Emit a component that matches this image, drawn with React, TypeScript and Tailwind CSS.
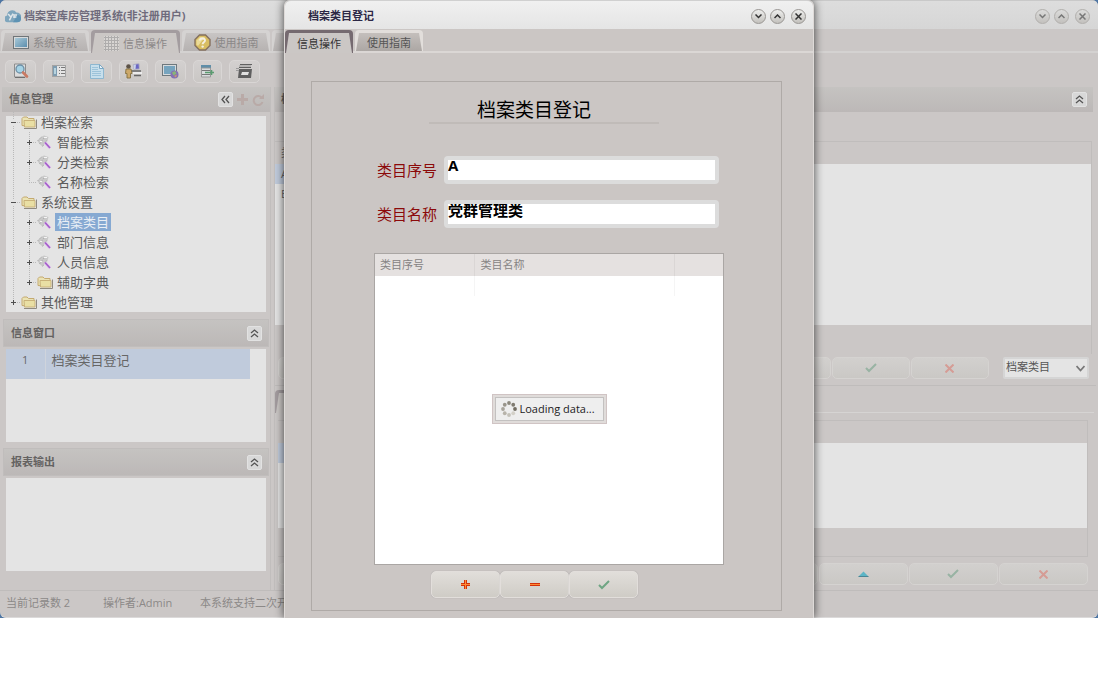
import { useState } from "react";
import type { ReactNode } from "react";

interface TreeItem {
  label: string;
  level: 1 | 2;
  sign: "plus" | "minus" | "none";
  folder: boolean;
  last?: boolean;
}

const TREE: TreeItem[] = [
  { label: "档案检索", level: 1, sign: "minus", folder: true },
  { label: "智能检索", level: 2, sign: "plus", folder: false },
  { label: "分类检索", level: 2, sign: "plus", folder: false },
  { label: "名称检索", level: 2, sign: "none", folder: false, last: true },
  { label: "系统设置", level: 1, sign: "minus", folder: true },
  { label: "档案类目", level: 2, sign: "plus", folder: false },
  { label: "部门信息", level: 2, sign: "plus", folder: false },
  { label: "人员信息", level: 2, sign: "plus", folder: false },
  { label: "辅助字典", level: 2, sign: "plus", folder: true, last: true },
  { label: "其他管理", level: 1, sign: "plus", folder: true, last: true },
];

/* ---------- icons ---------- */

const Logo = () => (
  <svg width="16" height="14" viewBox="0 0 16 14">
    <path d="M3.5 13.2A3.4 3.4 0 0 1 2.2 6.4 5 5 0 0 1 11.4 3.6 4.6 4.6 0 0 1 12 13.2z" fill="#7fa6bd" />
    <path d="M8 13.2 12.5 6A3.6 3.6 0 0 1 12.3 13.2z" fill="#5e93b4" />
    <path d="M3.2 5 6 8.2 8 4.6M6 8.2 4.4 11.4M9 9V6h3M9 8h2.4" fill="none" stroke="#dfe6ea" strokeWidth="1.5" />
  </svg>
);

const ScreenIcon = () => (
  <svg width="16" height="13" viewBox="0 0 16 13">
    <defs>
      <linearGradient id="screen" x1="0" y1="0" x2="1" y2="1">
        <stop offset="0" stopColor="#a9c9d8" />
        <stop offset="1" stopColor="#5d8fae" />
      </linearGradient>
    </defs>
    <rect x="0.5" y="0.5" width="15" height="12" fill="#d8dadb" stroke="#6f7578" />
    <rect x="2" y="2" width="12" height="9" fill="url(#screen)" />
  </svg>
);

const GridIcon = () => (
  <svg width="15" height="15" viewBox="0 0 15 15" stroke="#aeacac" fill="none">
    <path d="M0 0h15v15H0z" fill="#ffffff" fillOpacity="0.25" stroke="none" />
    <path d="M1.500 0v15M4.500 0v15M7.500 0v15M10.500 0v15M13.500 0v15M0 1.500h15M0 4.500h15M0 7.500h15M0 10.500h15M0 13.500h15" shapeRendering="crispEdges" />
  </svg>
);

const HelpIcon = () => (
  <svg width="17" height="17" viewBox="0 0 17 17">
    <path d="M5.500 1h6L16 5.500v6L11.500 16h-6L1 11.500v-6z" fill="#d8bd62" stroke="#84705f" strokeWidth="1.400" />
    <path d="M6 3h5l-7 9-1.500-1.500V6.500z" fill="#f0e2a6" opacity="0.8" />
    <path d="M6 6.500C6 3.800 11 3.800 11 6.500 11 8.300 8.600 8.300 8.600 10.300" fill="none" stroke="#f4efe0" strokeWidth="1.900" />
    <circle cx="8.600" cy="12.600" r="1.200" fill="#f4efe0" />
  </svg>
);

const FolderIcon = () => (
  <svg width="16" height="13" viewBox="0 0 16 13">
    <path d="M1 9.500V2.500L2.500 1h3.500L7.500 2.500h5.500v8z" fill="#ebe3b4" stroke="#c4aa70" />
    <path d="M3 4.500h11v6.500H3.500z" fill="#e9dfa4" stroke="#c9b27a" />
    <path d="M15.500 3.500v9H3" fill="none" stroke="#8f8a80" />
  </svg>
);

const ToolIcon = () => (
  <svg width="15" height="14" viewBox="0 0 15 14">
    <path d="M0.500 6 4 2l3-1.500L11.500 2 10.500 6 8 8.500 5.500 11.500 2.500 9z" fill="#c9c9c9" />
    <path d="M0.500 6 5 1.500M2.500 9 7 3M5.500 11.500l4-6" stroke="#adadad" strokeDasharray="2 1" fill="none" />
    <path d="M7 2.500h3M3 6.500h2" stroke="#f5f5f5" />
    <path d="m8 7.500 5 5.500" stroke="#e3c9ee" strokeWidth="3.200" />
    <path d="m8 7.500 5 5.500" stroke="#a45fca" strokeWidth="1.700" />
  </svg>
);

const Guide = ({ item }: { item: TreeItem }) => (
  <svg width="15" height="20" viewBox="0 0 15 20" className="shrink-0" fill="none">
    <path d={item.last ? "M7.500 0v10" : "M7.500 0v20"} stroke="#b9b9b9" strokeDasharray="1 1" />
    <path d="M7 10.500h8" stroke="#b9b9b9" strokeDasharray="1 1" />
    {item.sign !== "none" && (
      <>
        <rect x="4" y="7" width="7" height="7" fill="#e4e4e4" />
        <path d="M5 10.500h5" stroke="#4f4f4f" />
        {item.sign === "plus" && <path d="M7.500 8v5" stroke="#4f4f4f" />}
      </>
    )}
  </svg>
);

const Rail = () => (
  <svg width="16" height="20" viewBox="0 0 16 20" className="shrink-0">
    <path d="M7.500 0v20" stroke="#b9b9b9" strokeDasharray="1 1" />
  </svg>
);

const SearchIcon = () => (
  <svg width="16" height="16" viewBox="0 0 16 16">
    <path d="M1.500 1h11v13h-11z" fill="#dcdcdc" stroke="#8d8d8d" />
    <path d="M2 14.500h10" stroke="#6f6f6f" />
    <circle cx="7" cy="6" r="4" fill="#a5d3e6" stroke="#6d8fa5" strokeWidth="1.300" />
    <path d="m10 9.500 4 4" stroke="#c97a63" strokeWidth="2.600" strokeLinecap="round" />
  </svg>
);

const CardIcon = () => (
  <svg width="14" height="12" viewBox="0 0 14 12">
    <rect x="0.500" y="0.500" width="13" height="11" fill="#e4e4e4" stroke="#a3a3a3" />
    <rect x="1" y="1" width="4" height="10" fill="#7e9cb0" />
    <rect x="2" y="3" width="2" height="6" fill="#b6d3df" />
    <path d="M7 2.500h1M9 2.500h4M7 5.500h1M9 5.500h4M7 8.500h1M9 8.500h4" stroke="#777" />
  </svg>
);

const PageIcon = () => (
  <svg width="14" height="15" viewBox="0 0 14 15">
    <path d="M0.500 0.500h9l4 4v10h-13z" fill="#c7dfec" stroke="#8db7d0" />
    <path d="M9.500 0.500v4h4z" fill="#e9f3f8" stroke="#7aa7c4" />
    <path d="M2 3.500h6M2 5.500h6M2 7.500h9M2 9.500h9M2 11.500h9" stroke="#9cc3da" />
  </svg>
);

const PersonIcon = () => (
  <svg width="17" height="16" viewBox="0 0 17 16">
    <path d="M8 1.500 14 0.500l.5 5.500-5.500.500z" fill="#6a66c4" stroke="#b9b9c4" />
    <path d="M8.500 2 11 1.500 10.500 6H9z" fill="#c9d3ea" />
    <path d="M6 8h10M9 12.500h7" stroke="#666" strokeWidth="1.500" />
    <path d="M8 10h9" stroke="#ececec" strokeWidth="2" />
    <circle cx="3.500" cy="3.500" r="2.300" fill="#5d5348" />
    <path d="M1 6h5l1 4.500H5.500v4.500h-3.500v-4.500H0.500z" fill="#cda96a" stroke="#85713f" strokeWidth="0.900" />
  </svg>
);

const GlobeScreenIcon = () => (
  <svg width="17" height="15" viewBox="0 0 17 15">
    <rect x="0.500" y="0.500" width="14" height="11" fill="#d6dadc" stroke="#6e787d" />
    <rect x="2" y="2" width="11" height="8" fill="#76a4be" />
    <circle cx="12.500" cy="10.500" r="4" fill="#8571b4" />
    <path d="M10 8.500 13 7l1.500 2.500-3 2z" fill="#88b676" />
    <path d="m12 12 3-1.500-1 3z" fill="#cf9a6a" />
  </svg>
);

const InsertIcon = () => (
  <svg width="13" height="14" viewBox="0 0 13 14">
    <path d="M0 1h10v3H0z" fill="#5f8ea8" />
    <path d="M0.500 4h9v9h-9z" fill="#d9dcdd" stroke="#999" />
    <path d="M1 6.500h8M1 10.500h8" stroke="#777" />
    <path d="M4 8.500h9M10.500 6v5" stroke="#5a9c70" strokeWidth="1.600" />
  </svg>
);

const PrinterIcon = () => (
  <svg width="17" height="15" viewBox="0 0 17 15">
    <path d="M4 0.500h12M3 3.500h12" stroke="#606060" />
    <path d="M3 1.500h12v1H3z" fill="#9a9a9a" />
    <path d="M3 5h13l-1 9H2z" fill="#5f5f5f" />
    <path d="M6 8h7l-1 3H5z" fill="#e0e0e0" />
    <path d="M0 4.500h3M0 6.500h3" stroke="#999" />
  </svg>
);

const ChevronsUp = () => (
  <svg width="9" height="9" viewBox="0 0 9 9" fill="none" stroke="#555" strokeWidth="1.300">
    <path d="m1 4 3.500-3L8 4M1 8l3.500-3L8 8" />
  </svg>
);

const ChevronsLeft = () => (
  <svg width="9" height="9" viewBox="0 0 9 9" fill="none" stroke="#555" strokeWidth="1.300">
    <path d="M4 1 1 4.500 4 8M8 1 5 4.500 8 8" />
  </svg>
);

const CheckIcon = ({ dim }: { dim?: boolean }) => (
  <svg width="12" height="10" viewBox="0 0 12 10" fill="none">
    <path d="m1 5 3 3 7-7" stroke={dim ? "#98b3a3" : "#6fa583"} strokeWidth="2" />
  </svg>
);

const CrossIcon = () => (
  <svg width="9" height="9" viewBox="0 0 9 9">
    <path d="m0.500 0.500 8 8M8.500 0.500l-8 8" stroke="#d59c95" strokeWidth="2" />
  </svg>
);

const UpIcon = () => (
  <svg width="11" height="6" viewBox="0 0 11 6">
    <path d="M5.500 0.500 10.500 5.500h-10z" fill="#5cb5c6" />
    <path d="M0.500 5.500h10" stroke="#4a8594" />
  </svg>
);

const PlusIcon = () => (
  <svg width="9" height="9" viewBox="0 0 9 9" shapeRendering="crispEdges">
    <path d="M4.500 0v9M0 4.500h9" stroke="#d2320c" strokeWidth="3" />
    <path d="M4.500 0v9M0 4.500h9" stroke="#ff8a35" />
  </svg>
);

const MinusIcon = () => (
  <svg width="10" height="3" viewBox="0 0 10 3" shapeRendering="crispEdges">
    <path d="M0 1.500h10" stroke="#d2320c" strokeWidth="3" />
    <path d="M0 1.500h10" stroke="#ff8a35" />
  </svg>
);

const SPOKES = ["#8c887d", "#7f7b70", "#726d62", "#d3d0c8", "#c4c1b9", "#b7b3aa", "#a8a49b", "#99958b"];

const Spinner = () => (
  <svg width="16" height="16" viewBox="0 0 16 16">
    {SPOKES.map((color, i) => (
      <circle
        key={color}
        cx={8 + 6 * Math.sin((i * Math.PI) / 4)}
        cy={8 - 6 * Math.cos((i * Math.PI) / 4)}
        r="1.900"
        fill={color}
      />
    ))}
  </svg>
);

/* ---------- shared controls ---------- */

const WindowButtons = ({ dim }: { dim?: boolean }) => {
  const round = dim
    ? "size-[15px] rounded-full bg-linear-to-b from-[#dcdcdb] to-[#c3c1be] border border-[#b1afac] flex items-center justify-center text-[#777]"
    : "size-[15px] rounded-full bg-linear-to-b from-[#eeeeed] to-[#c3c1bd] border border-[#999693] flex items-center justify-center text-[#333]";
  return (
    <div className="flex items-center gap-1">
      <button className={round} aria-label="最小化">
        <svg width="7" height="5" viewBox="0 0 7 5" fill="none" stroke="currentColor" strokeWidth="1.500">
          <path d="M0.500 0.500 3.500 3.500 6.500 0.500" />
        </svg>
      </button>
      <button className={round} aria-label="最大化">
        <svg width="7" height="5" viewBox="0 0 7 5" fill="none" stroke="currentColor" strokeWidth="1.500">
          <path d="M0.500 4 3.500 1 6.500 4" />
        </svg>
      </button>
      <button className={`${round} ml-0.5`} aria-label="关闭">
        <svg width="7" height="7" viewBox="0 0 7 7" fill="none" stroke="currentColor" strokeWidth="1.500">
          <path d="m0.500 0.500 6 6M6.500 0.500l-6 6" />
        </svg>
      </button>
    </div>
  );
};

interface TabProps {
  label: string;
  width: string;
  active?: boolean;
  dim?: boolean;
  icon?: ReactNode;
}

const Tab = ({ label, width, active, dim, icon }: TabProps) => {
  const frame = active ? (dim ? "bg-[#a39c9f] h-[23px]" : "bg-[#756a70] h-[23px]") : dim ? "bg-[#d5d3d2] h-[21px]" : "bg-[#e2dedb] h-[21px]";
  const face = active
    ? "bg-[#cbc7c5]"
    : dim
      ? "bg-linear-to-b from-[#c8c5c4] to-[#b6b2b1]"
      : "bg-linear-to-b from-[#c4bfbc] to-[#aca7a4]";
  const text = dim ? "text-[#8b8888]" : active ? "text-[#333]" : "text-[#555]";
  return (
    <button role="tab" aria-selected={!!active} aria-label={label || "更多"} className={`${width} ${frame} rounded-t pt-[3px] px-px shrink-0`}>
      <span
        className={`${face} ${text} h-full flex items-center justify-center gap-1 text-[11px] leading-none whitespace-nowrap [clip-path:polygon(3px_0,calc(100%-3px)_0,100%_100%,0_100%)]`}
      >
        {icon}
        {label}
      </span>
    </button>
  );
};

const CollapseButton = ({ left, label }: { left?: boolean; label: string }) => (
  <button aria-label={label} className="size-[15px] rounded-xs border border-[#e2e2e2] bg-[#d8d8d8] flex items-center justify-center">
    {left ? <ChevronsLeft /> : <ChevronsUp />}
  </button>
);

const PanelHeader = ({ title }: { title: string }) => (
  <div className="h-7 mx-px border border-[#c0bdbc] bg-linear-to-b from-[#c5c3c1] to-[#bcb8b7] flex items-center justify-between pl-[7px] pr-1.5">
    <h2 className="text-[11px] font-bold text-[#646261]">{title}</h2>
    <CollapseButton label={`折叠${title}`} />
  </div>
);

const DimButton = ({ label, children }: { label: string; children?: ReactNode }) => (
  <button
    aria-label={label}
    className="flex-1 h-[22px] rounded-[5px] border border-[#d5d3d1] bg-linear-to-b from-[#d2d0ce] to-[#cac8c5] flex items-center justify-center"
  >
    {children}
  </button>
);

const TOOLS = [
  { label: "检索", width: "w-[31px]", icon: <SearchIcon /> },
  { label: "目录", width: "w-[31px]", icon: <CardIcon /> },
  { label: "文档", width: "w-[31px]", icon: <PageIcon /> },
  { label: "人员", width: "w-[29px]", icon: <PersonIcon /> },
  { label: "网络", width: "w-[31px]", icon: <GlobeScreenIcon /> },
  { label: "插入", width: "w-[29px]", icon: <InsertIcon /> },
  { label: "打印", width: "w-[31px]", icon: <PrinterIcon /> },
];

const Sidebar = () => {
  const [selected, setSelected] = useState("档案类目");

  return (
    <aside className="w-[271px] shrink-0 pl-0.5 border-r border-[#c1bebd]">
      <div className="h-[25px] bg-linear-to-b from-[#c5c3c1] to-[#bcb8b7] flex items-center pl-[7px] pr-1.5">
        <h2 className="flex-1 text-[11px] font-bold text-[#646261]">信息管理</h2>
        <div className="flex items-center gap-1">
          <CollapseButton left label="收起侧栏" />
          <button aria-label="新增">
            <svg width="11" height="11" viewBox="0 0 11 11">
              <path d="M5.500 0v11M0 5.500h11" stroke="#b9aaa7" strokeWidth="3" />
            </svg>
          </button>
          <button aria-label="刷新">
            <svg width="12" height="12" viewBox="0 0 12 12" fill="none">
              <path d="M9.500 3.500A4.500 4.500 0 1 0 10.500 8" stroke="#b9aaa7" strokeWidth="2" />
              <path d="M7 5h5V0z" fill="#b9aaa7" />
            </svg>
          </button>
        </div>
      </div>

      <ul className="mx-1 mt-1 mb-[7px] h-[196px] bg-[#e4e4e4] flex flex-col justify-end text-[13px] text-[#5b5b5b]">
        {TREE.map((item) => (
          <li key={item.label} className="h-5 shrink-0 flex items-center">
            {item.level === 2 && <Rail />}
            <Guide item={item} />
            <span className="w-4 mr-0.5 shrink-0">{item.folder ? <FolderIcon /> : <ToolIcon />}</span>
            <button
              onClick={() => setSelected(item.label)}
              className={
                item.label === selected
                  ? "px-0.5 h-[18px] leading-[18px] bg-[#86a9d2] text-[#e8eef5]"
                  : "px-0.5 h-[18px] leading-[18px]"
              }
            >
              {item.label}
            </button>
          </li>
        ))}
      </ul>

      <PanelHeader title="信息窗口" />
      <div className="mx-1 mt-0.5 mb-1.5 h-[93px] bg-[#e4e4e4]">
        <table className="w-[244px] border-collapse text-[#666]">
          <tbody>
            <tr className="h-[30px] bg-[#c0cbdc] align-top">
              <td className="w-[39px] border-r border-[#cfd4dc] text-center text-[11px] leading-[22px]">1</td>
              <td className="pl-1.5 text-[13px] leading-[22px]">档案类目登记</td>
            </tr>
          </tbody>
        </table>
      </div>

      <PanelHeader title="报表输出" />
      <div className="mx-1 mt-0.5 h-[93px] bg-[#e4e4e4]" />
    </aside>
  );
};

const Workspace = () => (
  <main className="flex-1 min-w-0 ml-[3px] mr-0.5 border-l border-[#c1bebd]">
    <div className="h-[25px] mr-[3px] pl-1.5 pr-1.5 bg-linear-to-b from-[#c5c3c1] to-[#bcb8b7] flex items-center justify-between">
      <h2 className="text-[11px] font-bold text-[#646261]">档案类目</h2>
      <CollapseButton label="折叠档案类目" />
    </div>

    <div className="mt-[29px] mr-1 h-[213px] border-t border-r border-[#c0bdbc]">
      <div className="h-[22px] pl-1.5 flex items-center text-[11px] text-[#666]">类目序号</div>
      <div className="h-[161px] bg-[#e4e4e4] text-[11px] leading-5 text-[#666]">
        <div className="h-5 w-[300px] pl-1.5 bg-[#c0cbdc]">A</div>
        <div className="h-5 w-[300px] pl-1.5">B</div>
      </div>
    </div>

    <div className="mt-[3px] pl-[3px] pr-[7px] pb-1.5 flex items-start border-b border-[#bfbcbb]">
      <div className="flex-1 flex gap-px">
        <DimButton label="首条" />
        <DimButton label="上一条" />
        <DimButton label="下一条" />
        <DimButton label="末条" />
        <DimButton label="新增" />
        <DimButton label="删除" />
        <DimButton label="编辑" />
        <DimButton label="确认">
          <CheckIcon dim />
        </DimButton>
        <DimButton label="取消">
          <CrossIcon />
        </DimButton>
      </div>
      <div className="relative ml-3.5">
        <select
          aria-label="类目"
          className="block w-[86px] h-[22px] appearance-none rounded-xs border-2 border-[#d5d5d5] bg-[#e4e4e4] px-px pb-0.5 text-[11px] leading-[14px] text-[#555]"
        >
          <option>档案类目</option>
        </select>
        <svg className="absolute right-1 top-2 pointer-events-none" width="9" height="7" viewBox="0 0 9 7" fill="none">
          <path d="m0.500 1 4 4.500 4-4.500" stroke="#777" strokeWidth="1.800" />
        </svg>
      </div>
    </div>

    <div className="mt-1 h-[23px] mr-0.5 border-b border-[#d6d4d3]">
      <Tab label="" width="w-[70px]" active dim />
    </div>

    <div className="mt-[7px] ml-[3px] mr-2 border-t border-r border-b border-[#c0bdbc]">
      <div className="h-[22px]" />
      <div className="h-[85px] bg-[#e4e4e4]">
        <div className="h-5 w-[300px] bg-[#c0cbdc]" />
      </div>
      <div className="h-7" />
    </div>

    <div className="mt-1.5 ml-[3px] mr-2 flex gap-px">
      <DimButton label="首条" />
      <DimButton label="上一条" />
      <DimButton label="下一条" />
      <DimButton label="末条" />
      <DimButton label="新增" />
      <DimButton label="删除" />
      <DimButton label="编辑">
        <UpIcon />
      </DimButton>
      <DimButton label="确认">
        <CheckIcon dim />
      </DimButton>
      <DimButton label="取消">
        <CrossIcon />
      </DimButton>
    </div>
  </main>
);

const FormButton = ({ label, children }: { label: string; children: ReactNode }) => (
  <button
    aria-label={label}
    className="w-[69px] h-[27px] rounded-[5px] border border-[#e2dedb] bg-linear-to-b from-[#e1deda] to-[#cfccc6] shadow-[0_0_1px_#999] flex items-center justify-center"
  >
    {children}
  </button>
);

const CategoryDialog = () => {
  const [code, setCode] = useState("A");
  const [name, setName] = useState("党群管理类");

  const inputClass =
    "w-[275px] h-7 rounded border-4 border-[#dcdcdc] bg-white pb-2.5 text-[15px] leading-5 font-bold text-black outline-none";

  return (
    <section
      role="dialog"
      aria-label="档案类目登记"
      className="absolute inset-y-0 left-1/2 -translate-x-1/2 w-[530px] rounded-t-md border-x border-[#dedad8] bg-[#cbc6c4] shadow-[0_0_10px_rgba(0,0,0,0.7)]"
    >
      <header className="h-[29px] pt-0.5 rounded-t-md bg-linear-to-b from-[#f0f0f0] to-[#e5e5e5] border-t border-[#d0d0d0] flex items-center justify-between pl-[23px] pr-[7px]">
        <h1 className="text-[11px] font-bold text-[#2c2745]">档案类目登记</h1>
        <WindowButtons />
      </header>
      <div role="tablist" className="h-6 pt-px flex items-start gap-0.5 border-b-2 border-[#dbd7d5]">
        <Tab label="信息操作" width="w-[68px]" active />
        <Tab label="使用指南" width="w-[68px]" />
      </div>

      <div className="mt-7 ml-[26px] mr-[31px] h-[530px] border border-[#afaaa7]">
        <div className="ml-[117px] w-[230px] mt-3.5 h-[28px] pl-12 border-b-2 border-[#c0bbb8] text-[19px] leading-7 text-black">
          档案类目登记
        </div>

        <form className="mt-8 ml-[65px]" onSubmit={(e) => e.preventDefault()}>
          <div className="flex items-center">
            <label htmlFor="code" className="w-[67px] text-[15px] text-[#8b0a0a]">
              类目序号
            </label>
            <input id="code" className={inputClass} value={code} onChange={(e) => setCode(e.target.value)} />
          </div>
          <div className="mt-4 flex items-center">
            <label htmlFor="name" className="w-[67px] text-[15px] text-[#8b0a0a]">
              类目名称
            </label>
            <input id="name" className={inputClass} value={name} onChange={(e) => setName(e.target.value)} />
          </div>
        </form>

        <div className="relative mt-[25px] ml-[62px] w-[350px] h-[312px] border border-[#aaa6a4] bg-white">
          <table className="w-full table-fixed border-collapse text-left text-[11px] text-[#858383]">
            <thead>
              <tr className="h-[22px] bg-[#e5e1e0]">
                <th className="w-[99px] pl-[5px] border-r border-[#dad6d5] font-normal">类目序号</th>
                <th className="w-[200px] pl-1.5 border-r border-[#dad6d5] font-normal">类目名称</th>
                <th />
              </tr>
            </thead>
            <tbody>
              <tr className="h-5">
                <td className="border-r border-[#f5f5f5]" />
                <td className="border-r border-[#f5f5f5]" />
                <td />
              </tr>
            </tbody>
          </table>
          <div className="absolute inset-0 flex items-center justify-center">
            <div role="status" className="p-0.5 border border-[#d0c4c4] bg-[#e0dcda]">
              <div className="h-6 w-[109px] border border-[#c3c1c0] bg-[#eeeeee] flex items-center gap-[3px] pl-[5px] text-[11px] text-[#222] whitespace-nowrap">
                <Spinner />
                Loading data...
              </div>
            </div>
          </div>
        </div>

        <div className="mt-1.5 ml-[119px] flex">
          <FormButton label="新增">
            <PlusIcon />
          </FormButton>
          <FormButton label="删除">
            <MinusIcon />
          </FormButton>
          <FormButton label="保存">
            <CheckIcon />
          </FormButton>
        </div>
      </div>
    </section>
  );
};

const App = () => {
  return (
    <div className="bg-white font-['Open_Sans','Noto_Sans_CJK_SC',sans-serif]">
      <div className="relative overflow-hidden bg-[#4f76a3]">
        <div className="rounded-md border-b border-[#dcdada] bg-[#cbc7c6] overflow-hidden">
          <header className="h-[29px] pt-0.5 bg-linear-to-b from-[#dddddd] to-[#d6d6d6] border-t border-[#c9c9c9] flex items-center pl-[5px] pr-2">
            <Logo />
            <h1 className="ml-[3px] flex-1 text-[11px] font-bold text-[#6f6b7c]">档案室库房管理系统(非注册用户)</h1>
            <WindowButtons dim />
          </header>

          <div role="tablist" className="h-6 pt-px pl-px flex items-start gap-0.5 border-b-2 border-[#d4d2d1]">
            <Tab label="系统导航" width="w-[88px]" dim icon={<ScreenIcon />} />
            <Tab label="信息操作" width="w-[89px]" dim active icon={<GridIcon />} />
            <Tab label="使用指南" width="w-[88px]" dim icon={<HelpIcon />} />
            <Tab label="" width="w-[88px]" dim />
          </div>

          <div role="toolbar" className="h-[34px] pt-0.5 pl-[5px] flex items-center gap-[7px]">
            {TOOLS.map((tool) => (
              <button
                key={tool.label}
                aria-label={tool.label}
                className={`${tool.width} h-[23px] rounded-[5px] border border-[#d9d6d5] bg-linear-to-b from-[#d3d0cf] to-[#cac7c5] flex items-center justify-center`}
              >
                {tool.icon}
              </button>
            ))}
          </div>

          <div className="flex h-[503px]">
            <Sidebar />
            <Workspace />
          </div>

          <footer className="h-[27px] border-t border-[#bfbcbb] pl-1.5 pb-0.5 flex items-center text-[11px] text-[#8c8988] whitespace-nowrap">
            <span className="w-[97px]">当前记录数 2</span>
            <span className="w-[97px]">操作者:Admin</span>
            <span>本系统支持二次开发</span>
          </footer>
        </div>

        <CategoryDialog />
      </div>
    </div>
  );
};

export default App;
